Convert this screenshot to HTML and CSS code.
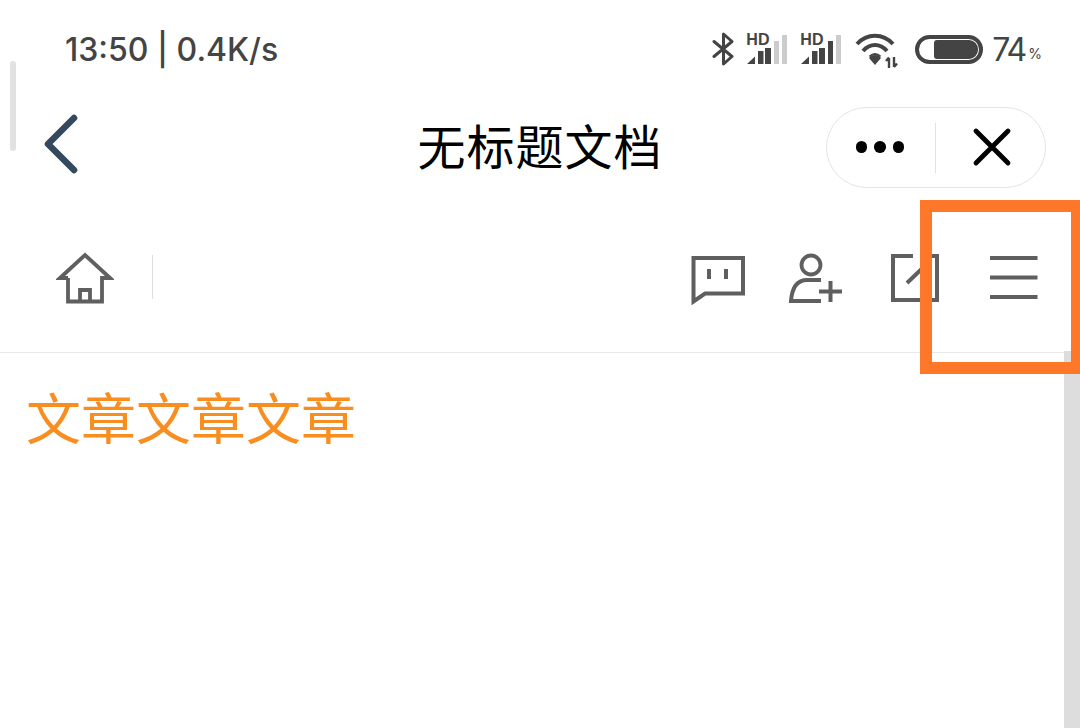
FILE: index.html
```html
<!DOCTYPE html>
<html lang="zh">
<head>
<meta charset="utf-8">
<title>无标题文档</title>
<link rel="stylesheet" href="styles.css">
</head>
<body>
<div class="screen">
  <header class="status">
    <span class="clock">13:50 | 0.4K/s</span>
    <div class="status-icons">
      <svg class="ic-bt" width="24" height="34" viewBox="0 0 24 34"><path d="M2 9.500 20 24.500 11.500 32V2L20 9.500 2 24.500" fill="none" stroke="#444" stroke-width="3" stroke-linejoin="round" stroke-linecap="round"/></svg>
      <div class="sim"><span class="hd">HD</span><svg width="42" height="30" viewBox="0 0 42 30"><path d="M1 29H9V21.500ZM12 16H17.500V29H12ZM19 13H25V29H19Z" fill="#444"/><path d="M28 6H33V29H28ZM36 0H41V29H36Z" fill="#ccc"/></svg></div>
      <div class="sim"><span class="hd">HD</span><svg width="42" height="30" viewBox="0 0 42 30"><path d="M1 29H9V21.500ZM12 16H17.500V29H12ZM19 13H25V29H19ZM28 6H33V29H28Z" fill="#444"/><path d="M36 0H41V29H36Z" fill="#ccc"/></svg></div>
      <svg class="ic-wifi" width="44" height="36" viewBox="0 0 44 36"><g fill="none" stroke="#444" stroke-width="4"><path d="M2 12C12 1 28 1 38 12"/><path d="M8 19C15 11 25 11 32 19"/></g><path d="M14 26C17 22 23 22 26 26L20 33Z" fill="#444"/><path d="M14.500 24.500C18 21.500 22 21.500 25.500 24.500" fill="none" stroke="#444" stroke-width="2"/><path d="M34 26V36M31 29 34 25.500M39 25V35M39 35 42 31.500" stroke="#444" stroke-width="2.400" fill="none"/></svg>
      <div class="battery"><div class="battery-fill"></div></div>
      <span class="pct">74</span><span class="pct-sign">%</span>
    </div>
  </header>

  <nav class="navbar">
    <svg class="back" width="36" height="62" viewBox="0 0 36 62"><path d="M31 4 5 30 31 56" fill="none" stroke="#34495e" stroke-width="6.600" stroke-linecap="round" stroke-linejoin="round"/></svg>
    <h1 class="title">无标题文档</h1>
    <div class="capsule">
      <div class="cap-more"><i></i><i></i><i></i></div>
      <div class="cap-close"><svg width="40" height="40" viewBox="0 0 40 40"><path d="M4 4 36 36M36 4 4 36" stroke="#000" stroke-width="4.800" stroke-linecap="round"/></svg></div>
    </div>
  </nav>

  <div class="toolbar">
    <svg class="home" width="58" height="52" viewBox="0 0 58 52"><path d="M12 26V49.500H46V26H54L29 3 4 26H12M24 49.500V38H34V49.500" fill="none" stroke="#5f5f5f" stroke-width="3.800"/></svg>
    <div class="tool-sep"></div>
    <div class="tool-right">
      <svg class="t-chat" width="54" height="50" viewBox="0 0 54 50"><path d="M2.500 3H52V38.500H14L2.500 46.500Z" fill="none" stroke="#5f5f5f" stroke-width="4"/><path d="M18 14V24M35 14V24" stroke="#5f5f5f" stroke-width="4"/></svg>
      <svg class="t-user" width="54" height="52" viewBox="0 0 54 52"><circle cx="22" cy="13" r="9.500" fill="none" stroke="#5f5f5f" stroke-width="3.800"/><path d="M32 28H18C8 28 3 36 2 49H32" fill="none" stroke="#5f5f5f" stroke-width="4"/><path d="M30 39.500H53M41.500 29V50" stroke="#5f5f5f" stroke-width="4"/></svg>
      <svg class="t-edit" width="48" height="48" viewBox="0 0 48 48"><path d="M22 2H2V46H46V2H38V24" fill="none" stroke="#5f5f5f" stroke-width="4"/><path d="M16 29 40 6" stroke="#5f5f5f" stroke-width="4"/></svg>
      <svg class="menu" width="48" height="44" viewBox="0 0 48 44"><path d="M0 2H47.500M0 21.500H47.500M0 41H47.500" stroke="#5f5f5f" stroke-width="4"/></svg>
    </div>
  </div>

  <main class="content">
    <p class="article">文章文章文章</p>
  </main>

  <div class="scroll-left"></div>
  <div class="scroll-right"></div>
  <div class="highlight"></div>
</div>
</body>
</html>
```
FILE: styles.css
```css
* { box-sizing: border-box; }
html, body { margin: 0; padding: 0; background: #fff; }
.screen {
  position: relative;
  width: 1080px;
  height: 728px;
  overflow: hidden;
  background: #fff;
  font-family: Inter, "Noto Sans CJK SC", sans-serif;
}
.status {
  height: 92px;
  padding: 6px 38px 0 65px;
  display: flex;
  align-items: center;
  justify-content: space-between;
  color: #444;
}
.clock { font-size: 32px; font-weight: 500; letter-spacing: 0; }
.status-icons { display: flex; align-items: center; }
.ic-bt { margin-right: 10px; }
.sim { position: relative; width: 42px; height: 30px; margin-right: 12px; margin-top: 1px; }
.sim svg { display: block; }
.hd { position: absolute; left: 0; top: -3px; font: 700 16px/15px "Liberation Sans", sans-serif; color: #444; }
.ic-wifi { margin: 2px 16px 0 1px; }
.battery {
  width: 68px;
  height: 29px;
  border: 4px solid #444;
  border-radius: 15px;
  padding: 1px 1px 1px 15px;
  display: flex;
  justify-content: flex-end;
}
.battery-fill { flex: 1; background: #444; border-radius: 3px 9px 9px 3px; }
.pct { font-size: 32px; font-weight: 400; letter-spacing: -2px; margin-left: 9px; }
.pct-sign { font-size: 14px; margin: 8px 0 0 3px; }

.navbar {
  height: 110px;
  display: flex;
  align-items: center;
  position: relative;
  padding: 0 34px 0 41px;
  justify-content: space-between;
}
.back { display: block; margin: 0 0 4px 2px; }
.title {
  position: absolute;
  left: 0;
  right: 0;
  margin: 0 0 7px;
  text-align: center;
  font: 400 48px/1 "Noto Sans CJK SC", sans-serif;
  letter-spacing: 1px;
  color: #000;
}
.capsule {
  position: relative;
  width: 220px;
  height: 81px;
  border: 1px solid #e4e4e4;
  border-radius: 41px;
  display: flex;
  align-items: center;
}
.capsule::after {
  content: "";
  position: absolute;
  left: 108px;
  top: 15px;
  height: 50px;
  width: 1px;
  background: #e2e2e2;
}
.cap-more { width: 109px; display: flex; justify-content: center; gap: 7px; padding-right: 3px; }
.cap-more i { width: 11.500px; height: 11.500px; border-radius: 50%; background: #000; }
.cap-close { flex: 1; display: flex; justify-content: center; padding: 0 0 0 2px; }
.cap-close svg { display: block; }

.toolbar {
  height: 151px;
  border-bottom: 1px solid #e9e9e9;
  display: flex;
  align-items: center;
  padding: 0 42px 0 56px;
}
.home { display: block; margin: 2px 38px 0 0; }
.tool-sep { width: 1px; height: 44px; background: #dedede; }
.tool-right { margin-left: auto; display: flex; align-items: center; gap: 45px; }
.tool-right svg { display: block; }
.t-chat { margin-top: 5px; margin-right: -1px; }
.t-user { margin-top: 2px; margin-right: 3px; }
.t-edit { margin-top: 2px; margin-right: 6px; }
.tool-right .menu { margin-top: 2px; }

.content { padding: 29px 26px; }
.article {
  margin: 0;
  font: 400 55px/1.200 "Noto Sans CJK SC", sans-serif;
  color: #f98e20;
}

.scroll-left {
  position: absolute;
  left: 10px;
  top: 61px;
  width: 6px;
  height: 90px;
  border-radius: 3px;
  background: #e2e2e2;
}
.scroll-right {
  position: absolute;
  left: 1064px;
  top: 351px;
  width: 16px;
  height: 377px;
  background: #ddd;
}
.highlight {
  position: absolute;
  left: 920px;
  top: 200px;
  width: 160px;
  height: 174px;
  border: solid #ff7729;
  border-width: 12px 9px 12px 12px;
}
```
